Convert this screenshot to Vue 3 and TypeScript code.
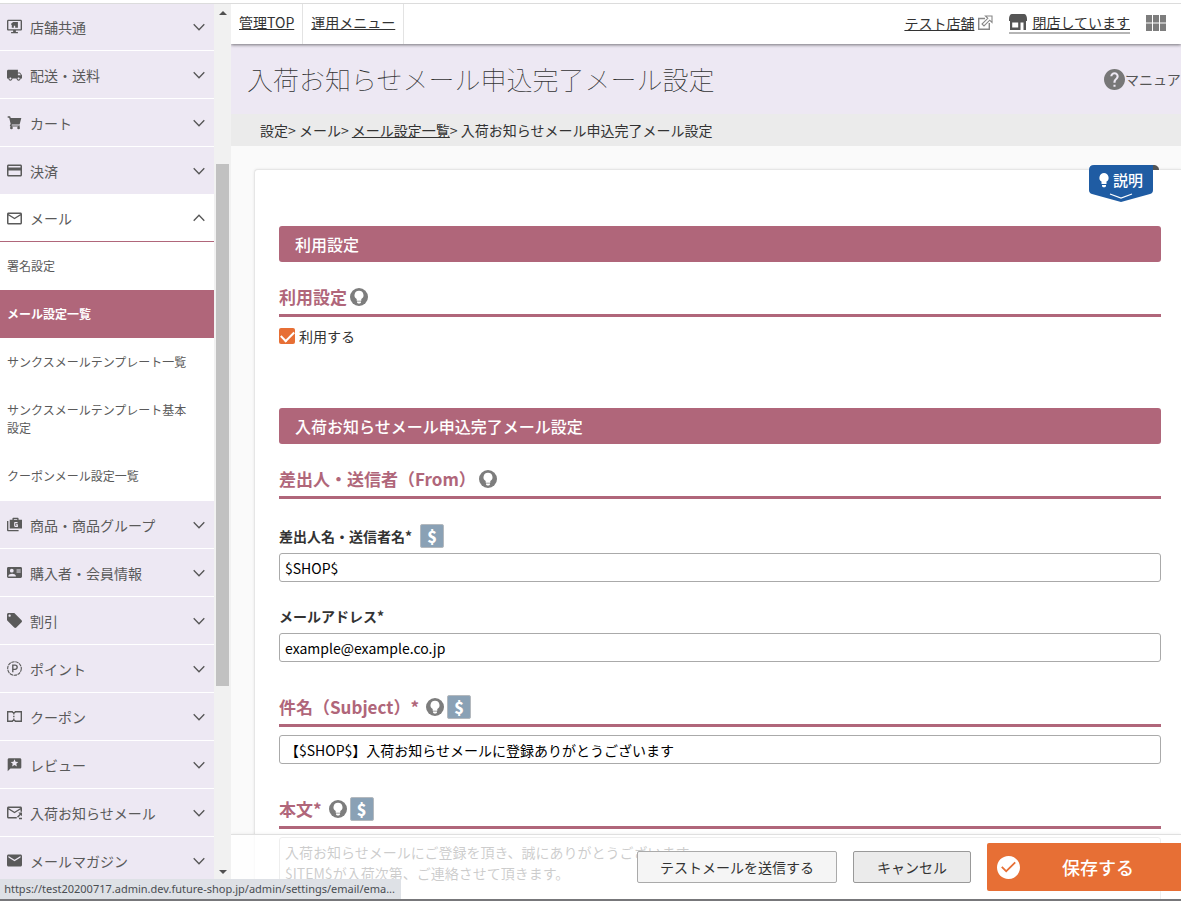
<script setup lang="ts">
import { ref } from 'vue'

interface MenuItem {
  label: string
  icon: string
  open?: boolean
}

const menuTop: MenuItem[] = [
  { label: '店舗共通', icon: 'monitor' },
  { label: '配送・送料', icon: 'truck' },
  { label: 'カート', icon: 'cart' },
  { label: '決済', icon: 'card' },
  { label: 'メール', icon: 'mail', open: true },
]
const subMenu: string[] = [
  '署名設定',
  'メール設定一覧',
  'サンクスメールテンプレート一覧',
  'サンクスメールテンプレート基本設定',
  'クーポンメール設定一覧',
]
const menuBottom: MenuItem[] = [
  { label: '商品・商品グループ', icon: 'goods' },
  { label: '購入者・会員情報', icon: 'member' },
  { label: '割引', icon: 'tag' },
  { label: 'ポイント', icon: 'point' },
  { label: 'クーポン', icon: 'coupon' },
  { label: 'レビュー', icon: 'review' },
  { label: '入荷お知らせメール', icon: 'arrival' },
  { label: 'メールマガジン', icon: 'magazine' },
]

const icons: Record<string, string> = {
  monitor:
    'M21 2H3C1.900 2 1 2.900 1 4v12c0 1.100.9 2 2 2h7v2H7v2h10v-2h-3v-2h7c1.100 0 2-.9 2-2V4c0-1.100-.9-2-2-2zm0 14H3V4h18v12zM7 8l3-2.500h7V14h-4v-3h-2v3H8V9.500H7z',
  truck:
    'M20 9h-3V5H3c-1.100 0-2 .9-2 2v11h2c0 1.660 1.340 3 3 3s3-1.340 3-3h6c0 1.660 1.340 3 3 3s3-1.340 3-3h2v-5l-3-4zM6 19.500c-.83 0-1.500-.67-1.500-1.500s.67-1.500 1.500-1.500 1.500.67 1.500 1.500-.67 1.500-1.500 1.500zm13.500-9l1.960 2.500H17v-2.500h2.500zm-1.500 9c-.83 0-1.500-.67-1.500-1.500s.67-1.500 1.500-1.500 1.500.67 1.500 1.500-.67 1.500-1.500 1.500z',
  cart:
    'M2 3h3.500l1 2.500H22L19.500 15H8.200l-.5 1.500H20v1.500H6l-1-1 1.300-3L4.200 5H2zM7.500 18a2 2 0 1 1 0 4 2 2 0 0 1 0-4zM18 18a2 2 0 1 1 0 4 2 2 0 0 1 0-4z',
  card:
    'M20 4H4c-1.110 0-2 .89-2 2v12c0 1.110.89 2 2 2h16c1.110 0 2-.89 2-2V6c0-1.110-.89-2-2-2zm0 14H4v-6h16v6zm0-10H4V6h16v2z',
  mail:
    'M20 4H4c-1.100 0-2 .9-2 2v12c0 1.100.9 2 2 2h16c1.100 0 2-.9 2-2V6c0-1.100-.9-2-2-2zm0 14H4V8l8 5 8-5v10zm-8-7L4 6h16l-8 5z',
  goods:
    'M1 7h2v13h15v2H3c-1.100 0-2-.9-2-2zM9 5V3.500C9 2.500 9.700 2 10.500 2h6c.8 0 1.500.6 1.500 1.500V5h5v13H5V5zm2 0h5V4h-5zm5.500 5V8.500H13c-.9 0-1.500.6-1.500 1.500v4c0 .9.600 1.500 1.500 1.500h4V11.500h-3V13h1.300v1H13v-4z',
  member:
    'M21 4H3c-1.100 0-2 .9-2 2v12c0 1.100.9 2 2 2h18c1.100 0 2-.9 2-2V6c0-1.100-.9-2-2-2zM8 6.500a2.800 2.800 0 1 1 0 5.600 2.800 2.800 0 0 1 0-5.600zM14 18H3v-1c0-2 3.500-3.200 5.500-3.200S14 15 14 17zm7-6h-6v-1.500h6zm0-3h-6V7.500h6z',
  tag:
    'M21.410 11.580l-9-9C12.050 2.220 11.550 2 11 2H4c-1.100 0-2 .9-2 2v7c0 .55.22 1.050.59 1.420l9 9c.36.36.86.58 1.410.58s1.050-.22 1.410-.59l7-7c.37-.36.59-.86.59-1.410s-.23-1.060-.59-1.420zM5.500 7C4.670 7 4 6.330 4 5.500S4.670 4 5.500 4 7 4.670 7 5.500 6.330 7 5.500 7z',
  coupon:
    'M1 4h8.500c0 1 .6 1.500 1.500 1.500S12.500 5 12.500 4H23v16H12.500c0-1-.6-1.500-1.500-1.500s-1.500.5-1.500 1.500H1zm2 2v12h5.200c.4-.7 1-1.100 1.800-1.300V15h2v1.700c.8.200 1.400.6 1.800 1.300H21V6h-7.200c-.4.700-1 1.100-1.800 1.300V9h-2V7.300C9.200 7.100 8.600 6.700 8.200 6zm7 5h2v2h-2z',
  review:
    'M20 3H4c-1.100 0-2 .9-2 2v17l4-4h14c1.100 0 2-.9 2-2V5c0-1.100-.9-2-2-2zm-4.500 12L12 12.900 8.500 15l.9-4-3-2.700 4-.3L12 4.300 13.600 8l4 .3-3 2.700z',
  arrival:
    'M20 4H4c-1.100 0-2 .9-2 2v12c0 1.100.9 2 2 2h11v-2H4V8l8 5 8-5v3h2V6c0-1.100-.9-2-2-2zm-8 7L4 6h16zM17 12h5v5l-1.700-1.700-3.600 3.600-1.400-1.400 3.600-3.600zM18 19h4v2h-4z',
  magazine:
    'M20 4H4c-1.100 0-2 .9-2 2v12c0 1.100.9 2 2 2h16c1.100 0 2-.9 2-2V6c0-1.100-.9-2-2-2zm0 4l-8 5-8-5V6l8 5 8-5v2z',
}

const snugIcons = ['card', 'mail', 'tag', 'arrival', 'magazine']
const viewBoxOf = (icon: string) => (snugIcons.includes(icon) ? '2 2 20 20' : '1 1 22 22')

const enabled = ref(true)
const senderName = ref('$SHOP$')
const address = ref('example@example.co.jp')
const subject = ref('【$SHOP$】入荷お知らせメールに登録ありがとうございます')
const body = ref(
  '入荷お知らせメールにご登録を頂き、誠にありがとうございます。\n$ITEM$が入荷次第、ご連絡させて頂きます。',
)
</script>

<template>
  <div class="window">
    <div class="app">
      <aside class="sidebar">
        <nav class="menu">
          <button
            v-for="item in menuTop"
            :key="item.label"
            type="button"
            class="menu-item"
            :class="{ open: item.open }"
          >
            <svg class="menu-icon" :viewBox="viewBoxOf(item.icon)"><path fill-rule="evenodd" :d="icons[item.icon]" /></svg>
            <span class="menu-label">{{ item.label }}</span>
            <svg class="chevron" viewBox="0 0 12 8">
              <path :d="item.open ? 'M.7 6.700 6 1.200l5.300 5.500' : 'M.7 1.200 6 6.700l5.300-5.500'" />
            </svg>
          </button>
          <div class="sub-menu">
            <a
              v-for="(sub, i) in subMenu"
              :key="sub"
              href="#"
              class="sub-item"
              :class="{ active: i === 1 }"
            >{{ sub }}</a>
          </div>
          <button v-for="item in menuBottom" :key="item.label" type="button" class="menu-item">
            <svg v-if="item.icon === 'point'" class="menu-icon" viewBox="1 1 22 22">
              <circle cx="12" cy="12" r="10" fill="none" stroke="currentColor" stroke-width="1.600" stroke-dasharray="5 1" />
              <path d="M9.500 17.500V7h3.300a3 3 0 0 1 0 6.200H9.500" fill="none" stroke="currentColor" stroke-width="2" />
            </svg>
            <svg v-else class="menu-icon" :viewBox="viewBoxOf(item.icon)"><path fill-rule="evenodd" :d="icons[item.icon]" /></svg>
            <span class="menu-label">{{ item.label }}</span>
            <svg class="chevron" viewBox="0 0 12 8"><path d="M.7 1.200 6 6.700l5.300-5.500" /></svg>
          </button>
        </nav>
        <div class="scrollbar">
          <svg class="arrow" viewBox="0 0 8 4"><path d="M0 4 4 0l4 4z" /></svg>
          <div class="track"><div class="thumb"></div></div>
          <svg class="arrow" viewBox="0 0 8 4"><path d="M0 0h8L4 4z" /></svg>
        </div>
      </aside>

      <div class="main">
        <header class="topbar">
          <nav class="tabs">
            <span class="tab"><a href="#">管理TOP</a></span>
            <span class="tab"><a href="#">運用メニュー</a></span>
          </nav>
          <div class="tools">
            <span class="shop">
              <a href="#">テスト店舗</a>
              <svg class="external" viewBox="0 0 16 16">
                <path d="M8 3.500H1.700v10.800h10.600V8" fill="none" stroke="#888" stroke-width="1.400" />
                <path d="M8.500 1H15v6.500l-2.300-2.300L7 11 5 9l5.800-5.700z" fill="#fff" stroke="#888" stroke-width="1.100" />
              </svg>
            </span>
            <span class="status">
              <svg class="store" viewBox="0 0 18 16">
                <path fill-rule="evenodd" d="M3 0h12c1.800 0 3 2 3 5v2h-1v9h-2.500V8.500h-3V16H1V7H0V5c0-3 1.200-5 3-5zm.2 8.500v5h6v-5z" />
              </svg>
              <a href="#">閉店しています</a>
            </span>
            <button type="button" class="apps" aria-label="アプリ">
              <svg viewBox="0 0 20 16"><path d="M0 0h6v7.500H0zM7 0h6v7.500H7zM14 0h6v7.500h-6zM0 8.500h6V16H0zM7 8.500h6V16H7zM14 8.500h6V16h-6z" /></svg>
            </button>
          </div>
        </header>

        <div class="title-band">
          <h1>入荷お知らせメール申込完了メール設定</h1>
          <a href="#" class="manual">
            <svg viewBox="2 2 20 20">
              <path d="M12 2C6.480 2 2 6.480 2 12s4.480 10 10 10 10-4.480 10-10S17.520 2 12 2zm1 17h-2v-2h2v2zm2.070-7.750l-.9.920C13.450 12.900 13 13.500 13 15h-2v-.5c0-1.100.45-2.100 1.170-2.830l1.240-1.260c.37-.36.59-.86.59-1.410 0-1.100-.9-2-2-2s-2 .9-2 2H8c0-2.210 1.790-4 4-4s4 1.790 4 4c0 .88-.36 1.680-.93 2.250z" />
            </svg>マニュアル
          </a>
        </div>
        <div class="breadcrumb">設定&gt; メール&gt; <a href="#">メール設定一覧</a>&gt; 入荷お知らせメール申込完了メール設定</div>

        <form class="card" @submit.prevent>
          <button type="button" class="help-tab">
            <svg class="help-shape" viewBox="0 0 70 37">
              <path d="M64 0c4 0 6 2 6 5h-6z" fill="#555" />
              <path d="M5 0h59v25q0 3-3 4L32 37 3 29q-3-1-3-4V5q0-5 5-5z" fill="#1f5ca3" />
              <path d="M21 29l11 4 11-4" fill="none" stroke="#fff" stroke-width="1.300" />
              <path d="M15 8a4.700 4.700 0 0 0-2.500 8.600V19h5v-2.400A4.700 4.700 0 0 0 15 8zM13 20h4v1.300l-1 1h-2l-1-1z" fill="#fff" />
            </svg>
            <span class="help-text">説明</span>
          </button>

          <section>
            <h2>利用設定</h2>
            <h3>
              利用設定
              <svg class="hint" viewBox="0 0 18 18">
                <circle cx="9" cy="9" r="9" fill="#7d7d7d" />
                <path d="M9 2.800a4.400 4.400 0 0 0-2.300 8.200v1.800h4.600V11A4.400 4.400 0 0 0 9 2.800zM7 13.500h4v1l-1 1H8l-1-1z" fill="#fff" />
              </svg>
            </h3>
            <label class="check"><input v-model="enabled" type="checkbox" />利用する</label>
          </section>

          <section>
            <h2>入荷お知らせメール申込完了メール設定</h2>
            <h3>
              差出人・送信者（From）
              <svg class="hint" viewBox="0 0 18 18">
                <circle cx="9" cy="9" r="9" fill="#7d7d7d" />
                <path d="M9 2.800a4.400 4.400 0 0 0-2.300 8.200v1.800h4.600V11A4.400 4.400 0 0 0 9 2.800zM7 13.500h4v1l-1 1H8l-1-1z" fill="#fff" />
              </svg>
            </h3>
            <div class="fields">
              <div class="field">
                <div class="field-label">
                  <label for="sender">差出人名・送信者名*</label>
                  <button type="button" class="dollar">$</button>
                </div>
                <input id="sender" v-model="senderName" type="text" class="text" />
              </div>
              <div class="field">
                <div class="field-label"><label for="address">メールアドレス*</label></div>
                <input id="address" v-model="address" type="text" class="text" />
              </div>
            </div>

            <h3 class="spaced">
              <label for="subject">件名（Subject）*</label>
              <span class="marks">
                <svg class="hint" viewBox="0 0 18 18">
                  <circle cx="9" cy="9" r="9" fill="#7d7d7d" />
                  <path d="M9 2.800a4.400 4.400 0 0 0-2.300 8.200v1.800h4.600V11A4.400 4.400 0 0 0 9 2.800zM7 13.500h4v1l-1 1H8l-1-1z" fill="#fff" />
                </svg>
                <button type="button" class="dollar">$</button>
              </span>
            </h3>
            <input id="subject" v-model="subject" type="text" class="text" />

            <h3 class="spaced">
              <label for="body">本文*</label>
              <span class="marks">
                <svg class="hint" viewBox="0 0 18 18">
                  <circle cx="9" cy="9" r="9" fill="#7d7d7d" />
                  <path d="M9 2.800a4.400 4.400 0 0 0-2.300 8.200v1.800h4.600V11A4.400 4.400 0 0 0 9 2.800zM7 13.500h4v1l-1 1H8l-1-1z" fill="#fff" />
                </svg>
                <button type="button" class="dollar">$</button>
              </span>
            </h3>
            <textarea id="body" v-model="body" class="text" rows="10"></textarea>
          </section>
        </form>

        <footer class="actions">
          <button type="button" class="plain test">テストメールを送信する</button>
          <button type="button" class="plain cancel">キャンセル</button>
          <button type="button" class="save">
            <svg viewBox="2 2 20 20">
              <path d="M12 2C6.480 2 2 6.480 2 12s4.480 10 10 10 10-4.480 10-10S17.520 2 12 2zm-2 14.400l-4.400-4.400 1.100-1.100 3.300 3.300 7.300-7.300 1.100 1.100z" />
            </svg>
            <span>保存する</span>
          </button>
        </footer>
      </div>
    </div>
    <div class="link-status"><span>https://test20200717.admin.dev.future-shop.jp/admin/settings/email/ema...</span></div>
  </div>
</template>

<style>
body {
  background: #fff;
}
</style>

<style scoped>
* {
  box-sizing: border-box;
}
.window {
  position: relative;
  display: flex;
  flex-direction: column;
  height: 100vh;
  padding-top: 3px;
  border-bottom: 2px solid #77777a;
  overflow: hidden;
  font-family: 'Noto Sans CJK JP', sans-serif;
  font-size: 14px;
  line-height: 20px;
  color: #333;
}
a {
  color: inherit;
}
button {
  font-family: inherit;
  margin: 0;
  padding: 0;
  border: 0;
  background: none;
  color: inherit;
}
.app {
  display: grid;
  grid-template-columns: 231px minmax(0, 1fr);
  flex: 1;
  min-height: 0;
  border-top: 1px solid #dcdcdc;
}

/* sidebar */
.sidebar {
  display: grid;
  grid-template-columns: minmax(0, 1fr) 17px;
  min-height: 0;
}
.menu {
  display: flex;
  flex-direction: column;
  min-height: 0;
  margin-top: -1px;
  overflow: hidden;
  background: #fff;
  color: #5a5a5a;
  clip-path: inset(1px 0 0 0);
}
.menu-item {
  flex: none;
  display: flex;
  align-items: center;
  gap: 8px;
  height: 48px;
  padding: 0 9px 0 7px;
  border-bottom: 1px solid #fff;
  background: #ede8f3;
  font-size: 14px;
  line-height: 20px;
  text-align: left;
}
.menu-item.open {
  height: 47px;
  background: #fff;
  border-bottom-color: #b0667a;
}
.menu-icon {
  width: 15px;
  height: 15px;
  fill: currentColor;
}
.menu-label {
  flex: 1;
}
.chevron {
  width: 12px;
  height: 8px;
  fill: none;
  stroke: #555;
  stroke-width: 1.3;
}
.sub-menu {
  flex: none;
  display: flex;
  flex-direction: column;
  border-bottom: 1px solid #fff;
}
.sub-item {
  padding: 15px 24px 15px 7px;
  font-size: 12px;
  line-height: 18px;
  text-decoration: none;
}
.sub-item.active {
  background: #b0667a;
  color: #fff;
  font-weight: 700;
}
.scrollbar {
  display: flex;
  flex-direction: column;
  align-items: center;
  padding: 7px 0 25px;
  background: #f1f1f1;
}
.arrow {
  width: 8px;
  height: 4px;
  fill: #505050;
}
.track {
  flex: 1;
  display: flex;
  flex-direction: column;
  padding: 149px 0 184px;
}
.thumb {
  flex: 1;
  width: 13px;
  background: #c1c1c1;
}

/* main column */
.main {
  position: relative;
  min-height: 0;
  overflow: hidden;
  background: #fafafa;
}
.topbar {
  position: relative;
  display: flex;
  justify-content: space-between;
  height: 40px;
  background: #fff;
  box-shadow: 0 1px 3px rgba(0, 0, 0, 0.5);
}
.tabs,
.tools {
  display: flex;
}
.tab {
  padding: 8px;
  border-right: 1px solid #e3e3e3;
}
.tools {
  align-items: center;
  gap: 16px;
  padding: 0 15px 2px 0;
}
.shop,
.status {
  display: flex;
  align-items: center;
  gap: 3px;
}
.external {
  width: 16px;
  height: 16px;
}
.status {
  gap: 5px;
  border-bottom: 2px solid #b5b5b5;
}
.store {
  width: 18px;
  height: 16px;
  fill: #555;
}
.apps {
  display: flex;
}
.apps svg {
  width: 20px;
  height: 16px;
  fill: #7d7d7d;
}
.title-band {
  display: flex;
  align-items: center;
  justify-content: space-between;
  height: 70px;
  padding-left: 16px;
  background: #ede8f3;
}
h1 {
  margin: 0;
  font-size: 26px;
  line-height: 40px;
  font-weight: 100;
}
.manual {
  display: flex;
  align-items: center;
  width: 77px;
  overflow: hidden;
  white-space: nowrap;
  text-decoration: none;
  color: #555;
}
.manual svg {
  flex: none;
  width: 21px;
  height: 21px;
  fill: #777;
}
.breadcrumb {
  padding: 6px 29px;
  background: #ebebeb;
}
.card {
  position: relative;
  margin: 23px 0 0 23px;
  padding: 56px 20px 24px 24px;
  border: 1px solid #e6e6e6;
  border-right: 0;
  border-radius: 4px 0 0 0;
  background: #fff;
  box-shadow: 0 0 3px rgba(0, 0, 0, 0.08);
}
.help-tab {
  position: absolute;
  top: -5px;
  right: 22px;
  width: 70px;
  height: 37px;
}
.help-shape {
  display: block;
  width: 70px;
  height: 37px;
}
.help-text {
  position: absolute;
  top: 5px;
  left: 24px;
  font-size: 15px;
  line-height: 20px;
  font-weight: 500;
  color: #fff;
}
section + section {
  margin-top: 60px;
}
h2 {
  margin: 0;
  padding: 6px 16px;
  border-radius: 3px;
  background: #b0667a;
  color: #fff;
  font-size: 16px;
  line-height: 24px;
  font-weight: 500;
}
h3 {
  display: flex;
  align-items: center;
  gap: 3px;
  height: 38px;
  margin: 17px 0 8px;
  border-bottom: 3px solid #b0667a;
  color: #b0667a;
  font-size: 17px;
  line-height: 24px;
  font-weight: 700;
}
h3.spaced {
  gap: 7px;
  margin-top: 27px;
}
.marks {
  display: flex;
  align-items: center;
  gap: 3px;
}
.hint {
  width: 18px;
  height: 18px;
}
.check {
  display: flex;
  align-items: center;
  gap: 4px;
  height: 24px;
  margin-top: -1px;
}
.check input {
  appearance: none;
  width: 16px;
  height: 16px;
  margin: 0;
  border-radius: 2px;
  background: #e76f35;
  display: grid;
  place-items: center;
}
.check input:checked::before {
  content: '';
  width: 11px;
  height: 6px;
  border: solid #fff;
  border-width: 0 0 2px 2px;
  transform: translateY(-1px) rotate(-45deg);
}
.fields {
  display: flex;
  flex-direction: column;
  gap: 22px;
  padding-top: 17px;
}
.field {
  display: flex;
  flex-direction: column;
  gap: 5px;
}
.field-label {
  display: flex;
  align-items: center;
  gap: 8px;
  height: 24px;
  font-weight: 700;
}
.dollar {
  width: 24px;
  height: 24px;
  border: 1px solid #b4b9be;
  border-radius: 2px;
  background: #8aa1b5;
  color: #fff;
  font-size: 16px;
  line-height: 20px;
  font-weight: 900;
  text-align: center;
}
.text {
  display: block;
  width: 100%;
  padding: 0 5px;
  border: 1px solid #aaa;
  border-radius: 3px;
  background: #fff;
  color: #000;
  font-family: inherit;
  font-size: 14px;
  line-height: 21px;
}
input.text {
  height: 29px;
}
textarea.text {
  padding-top: 4px;
  resize: none;
}
.actions {
  position: absolute;
  right: 0;
  bottom: 0;
  left: 0;
  display: flex;
  align-items: center;
  justify-content: flex-end;
  gap: 16px;
  height: 65px;
  border-top: 1px solid #e0e0e0;
  background: rgba(255, 255, 255, 0.8);
  box-shadow: 0 0 3px rgba(0, 0, 0, 0.08);
}
.plain {
  height: 32px;
  border: 1px solid #aaa;
  border-radius: 2px;
  font-size: 14px;
  line-height: 20px;
  color: #333;
}
.test {
  padding: 0 22px;
  background: #f5f5f5;
}
.cancel {
  padding: 0 23px;
  border-color: #999;
  background: #ebebeb;
}
.save {
  display: flex;
  align-items: center;
  width: 194px;
  height: 48px;
  padding-left: 10px;
  border-radius: 2px 0 0 2px;
  background: #e76f35;
  color: #fff;
  font-size: 18px;
  line-height: 26px;
  font-weight: 500;
}
.save svg {
  width: 23px;
  height: 23px;
  fill: #fff;
}
.save span {
  padding-left: 42px;
}
.link-status {
  position: absolute;
  bottom: 0;
  left: 0;
  display: flex;
  justify-content: flex-end;
  width: 401px;
  height: 20px;
  padding-right: 6px;
  overflow: hidden;
  background: #dee1e6;
  color: #4a4d52;
  font-family: 'Noto Sans', sans-serif;
  font-size: 11px;
  line-height: 20px;
  white-space: nowrap;
}
</style>
